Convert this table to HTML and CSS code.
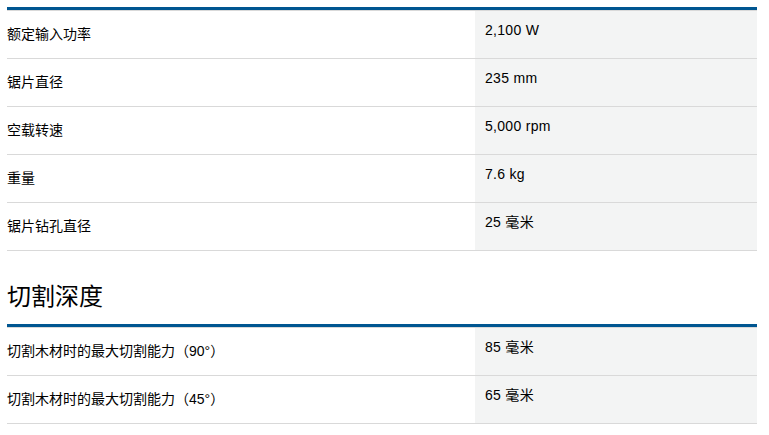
FILE: index.html
```html
<!DOCTYPE html>
<html lang="zh-CN">
<head>
<meta charset="utf-8">
<title>技术参数</title>
<link rel="stylesheet" href="styles.css">
</head>
<body>
<div class="page">
  <div class="spec-table">
    <div class="spec-row"><div class="spec-label">额定输入功率</div><div class="spec-value">2,100 W</div></div>
    <div class="spec-row"><div class="spec-label">锯片直径</div><div class="spec-value">235 mm</div></div>
    <div class="spec-row"><div class="spec-label">空载转速</div><div class="spec-value">5,000 rpm</div></div>
    <div class="spec-row"><div class="spec-label">重量</div><div class="spec-value">7.6 kg</div></div>
    <div class="spec-row"><div class="spec-label">锯片钻孔直径</div><div class="spec-value">25 毫米</div></div>
  </div>
  <h2 class="section-title">切割深度</h2>
  <div class="spec-table">
    <div class="spec-row"><div class="spec-label">切割木材时的最大切割能力（90°）</div><div class="spec-value">85 毫米</div></div>
    <div class="spec-row"><div class="spec-label">切割木材时的最大切割能力（45°）</div><div class="spec-value">65 毫米</div></div>
  </div>
</div>
</body>
</html>
```
FILE: styles.css
```css
html, body {
  margin: 0;
  padding: 0;
  background: #fff;
}

body {
  font-family: "Liberation Sans", "Noto Sans CJK SC", sans-serif;
  color: #000;
}

.page {
  width: 750px;
  padding: 7px 0 0 7px;
}

.spec-table {
  border-top: 3px solid #005691;
  border-bottom: 1px solid #d9d9d9;
}

.spec-row {
  display: grid;
  grid-template-columns: 468px 1fr;
  height: 48px;
  box-sizing: border-box;
  border-top: 1px solid #d9d9d9;
}

.spec-label {
  display: flex;
  align-items: center;
  padding-bottom: 2px;
  font-size: 14px;
  line-height: 20px;
}

.spec-value {
  background: #f3f4f4;
  padding: 9px 10px 0 10px;
  font-size: 14px;
  line-height: 20px;
  letter-spacing: 0.3px;
}

.section-title {
  margin: 30px 0 11px 0;
  font-size: 24px;
  font-weight: normal;
  line-height: 32px;
}
```
